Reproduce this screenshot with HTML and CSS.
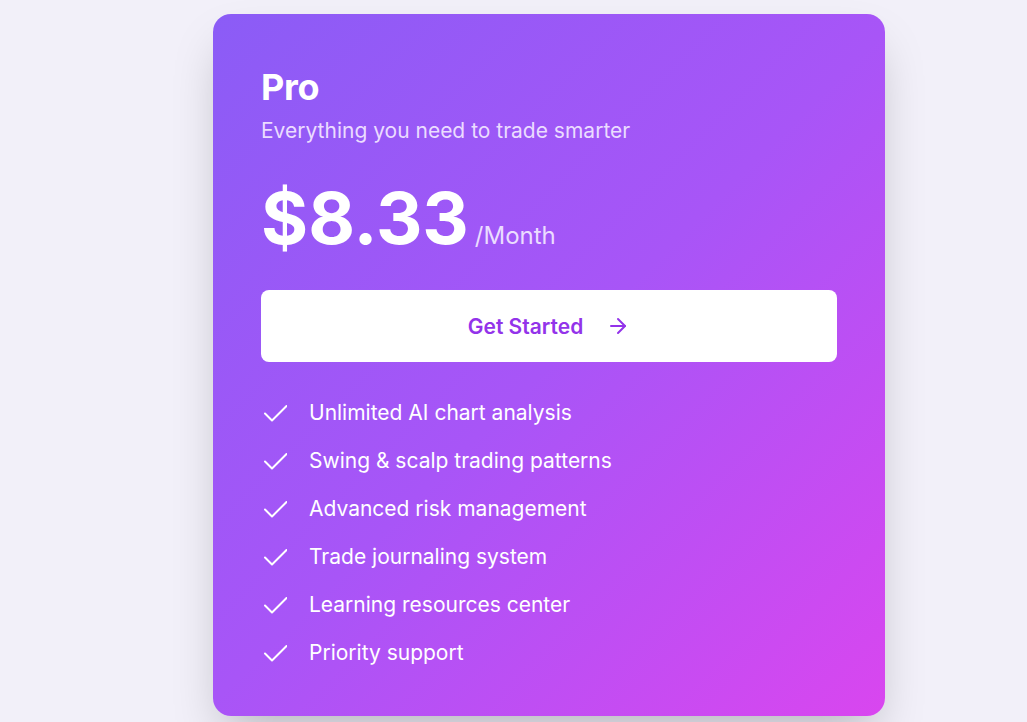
FILE: index.html
```html
<!DOCTYPE html>
<html lang="en">
<head>
<meta charset="utf-8">
<title>Pro Plan</title>
<link rel="stylesheet" href="styles.css">
</head>
<body>
<main class="page">
  <section class="card">
    <h2 class="title">Pro</h2>
    <p class="subtitle">Everything you need to trade smarter</p>
    <div class="price">
      <span class="amount">$8.33</span>
      <span class="period">/Month</span>
    </div>
    <button class="cta">
      <span>Get Started</span>
      <svg class="arrow" width="24" height="24" viewBox="0 0 24 24" fill="none" stroke="currentColor" stroke-width="2" stroke-linecap="round" stroke-linejoin="round"><path d="M5 12h14"/><path d="m12 5 7 7-7 7"/></svg>
    </button>
    <ul class="features">
      <li><svg class="check" width="24" height="24" viewBox="0 0 24 24" fill="none" stroke="currentColor" stroke-width="2" stroke-linecap="round" stroke-linejoin="round"><path d="M2 12.5 9 19.5 23.5 5"/></svg><span>Unlimited AI chart analysis</span></li>
      <li><svg class="check" width="24" height="24" viewBox="0 0 24 24" fill="none" stroke="currentColor" stroke-width="2" stroke-linecap="round" stroke-linejoin="round"><path d="M2 12.5 9 19.5 23.5 5"/></svg><span>Swing &amp; scalp trading patterns</span></li>
      <li><svg class="check" width="24" height="24" viewBox="0 0 24 24" fill="none" stroke="currentColor" stroke-width="2" stroke-linecap="round" stroke-linejoin="round"><path d="M2 12.5 9 19.5 23.5 5"/></svg><span>Advanced risk management</span></li>
      <li><svg class="check" width="24" height="24" viewBox="0 0 24 24" fill="none" stroke="currentColor" stroke-width="2" stroke-linecap="round" stroke-linejoin="round"><path d="M2 12.5 9 19.5 23.5 5"/></svg><span>Trade journaling system</span></li>
      <li><svg class="check" width="24" height="24" viewBox="0 0 24 24" fill="none" stroke="currentColor" stroke-width="2" stroke-linecap="round" stroke-linejoin="round"><path d="M2 12.5 9 19.5 23.5 5"/></svg><span>Learning resources center</span></li>
      <li><svg class="check" width="24" height="24" viewBox="0 0 24 24" fill="none" stroke="currentColor" stroke-width="2" stroke-linecap="round" stroke-linejoin="round"><path d="M2 12.5 9 19.5 23.5 5"/></svg><span>Priority support</span></li>
    </ul>
  </section>
</main>
</body>
</html>
```

FILE: styles.css
```css
* { box-sizing: border-box; }

html, body {
  margin: 0;
  padding: 0;
  height: 100%;
}

body {
  background: #f2f0f9;
  font-family: "Inter", "Noto Sans", sans-serif;
  overflow: hidden;
}

.page {
  padding: 14px 0 0 213px;
}

.card {
  width: 672px;
  height: 702px;
  padding: 48px;
  border-radius: 18px;
  background: linear-gradient(135deg, #8b5cf6 0%, #a855f7 50%, #d946ef 100%);
  box-shadow: 0 25px 50px -12px rgba(0, 0, 0, 0.25);
  color: #ffffff;
}

.title {
  margin: 0;
  font-size: 36px;
  line-height: 50px;
  font-weight: 700;
  letter-spacing: -0.3px;
}

.subtitle {
  margin: 5px 0 0;
  font-size: 21px;
  line-height: 28px;
  color: #ebdcff;
}

.price {
  display: flex;
  align-items: baseline;
  gap: 6px;
  margin-top: 33px;
}

.amount {
  font-size: 72px;
  line-height: 80px;
  font-weight: 700;
}

.period {
  font-size: 24px;
  line-height: 32px;
  color: #ebdcff;
}

.cta {
  display: flex;
  align-items: center;
  justify-content: center;
  gap: 23px;
  width: 100%;
  height: 72px;
  margin-top: 32px;
  border: none;
  border-radius: 8px;
  background: #ffffff;
  color: #9333ea;
  font-family: inherit;
  font-size: 21px;
  font-weight: 600;
  cursor: pointer;
}

.arrow { display: block; }

.features {
  list-style: none;
  margin: 35px 0 0;
  padding: 0;
  display: flex;
  flex-direction: column;
  gap: 16px;
}

.features li {
  display: flex;
  align-items: center;
  gap: 22px;
  height: 32px;
  font-size: 21px;
  line-height: 32px;
}

.check {
  display: block;
  flex: none;
  margin-left: 2px;
}
```
